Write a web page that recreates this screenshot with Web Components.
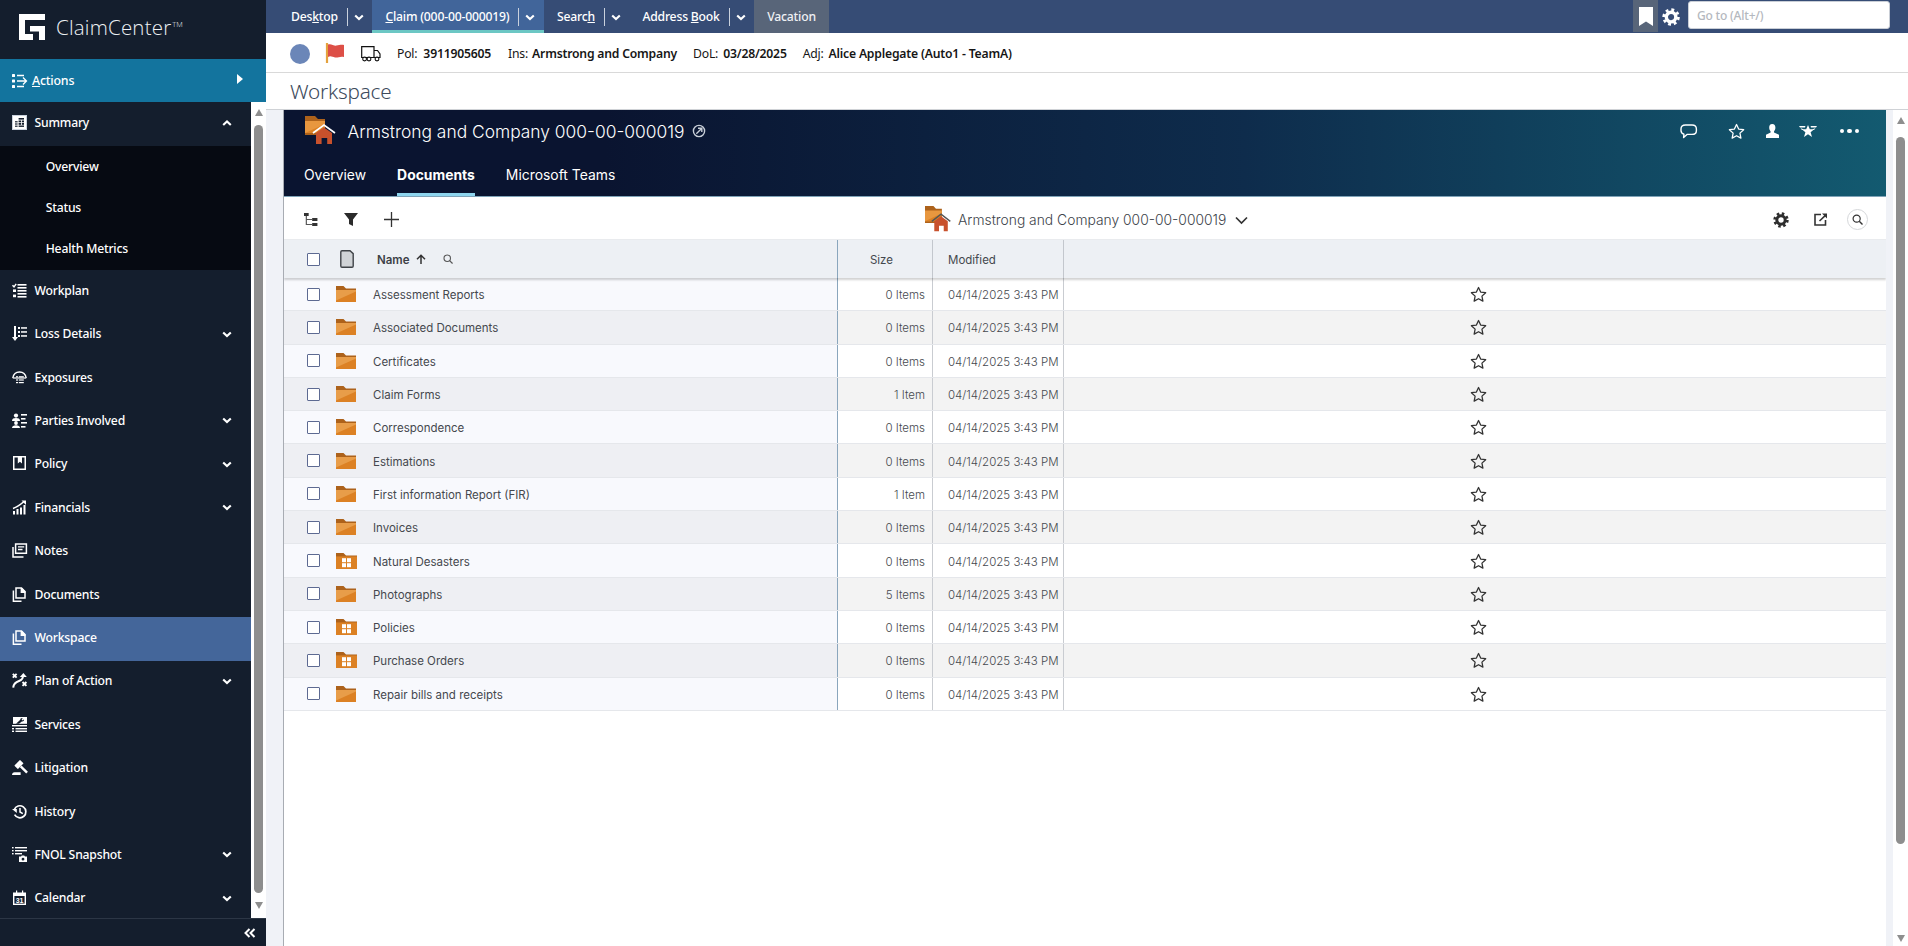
<!DOCTYPE html>
<html lang="en"><head><meta charset="utf-8"><title>ClaimCenter</title>
<style>
html,body{margin:0;padding:0;height:946px;overflow:hidden;background:#fff}
body{font-family:"Noto Sans",sans-serif}
cc-app{height:946px}
</style></head><body>
<cc-app>
  <cc-sidebar slot="side">
    <cc-nav-item icon="summary" chevron="up" style="--h:44px">Summary</cc-nav-item>
    <cc-sub-item>Overview</cc-sub-item>
    <cc-sub-item>Status</cc-sub-item>
    <cc-sub-item>Health Metrics</cc-sub-item>
    <cc-nav-item icon="workplan">Workplan</cc-nav-item>
    <cc-nav-item icon="loss" chevron="down">Loss Details</cc-nav-item>
    <cc-nav-item icon="exposures">Exposures</cc-nav-item>
    <cc-nav-item icon="parties" chevron="down">Parties Involved</cc-nav-item>
    <cc-nav-item icon="policy" chevron="down">Policy</cc-nav-item>
    <cc-nav-item icon="financials" chevron="down">Financials</cc-nav-item>
    <cc-nav-item icon="notes">Notes</cc-nav-item>
    <cc-nav-item icon="documents">Documents</cc-nav-item>
    <cc-nav-item icon="documents" selected>Workspace</cc-nav-item>
    <cc-nav-item icon="plan" chevron="down">Plan of Action</cc-nav-item>
    <cc-nav-item icon="services">Services</cc-nav-item>
    <cc-nav-item icon="litigation">Litigation</cc-nav-item>
    <cc-nav-item icon="history">History</cc-nav-item>
    <cc-nav-item icon="fnol" chevron="down">FNOL Snapshot</cc-nav-item>
    <cc-nav-item icon="calendar" chevron="down">Calendar</cc-nav-item>
  </cc-sidebar>
  <cc-topbar slot="top">
    <cc-nav-tab menu><span>Des<u>k</u>top</span></cc-nav-tab>
    <cc-nav-tab menu active><span><u>C</u>laim (000-00-000019)</span></cc-nav-tab>
    <cc-nav-tab menu><span>Searc<u>h</u></span></cc-nav-tab>
    <cc-nav-tab menu><span>Address <u>B</u>ook</span></cc-nav-tab>
    <cc-nav-tab muted><span>Vacation</span></cc-nav-tab>
  </cc-topbar>
  <cc-infobar slot="info"></cc-infobar>
  <cc-pagetitle slot="title">Workspace</cc-pagetitle>
  <cc-workspace slot="work">
    <cc-doc-row name="Assessment Reports" size="0 Items"></cc-doc-row>
    <cc-doc-row name="Associated Documents" size="0 Items"></cc-doc-row>
    <cc-doc-row name="Certificates" size="0 Items"></cc-doc-row>
    <cc-doc-row name="Claim Forms" size="1 Item"></cc-doc-row>
    <cc-doc-row name="Correspondence" size="0 Items"></cc-doc-row>
    <cc-doc-row name="Estimations" size="0 Items"></cc-doc-row>
    <cc-doc-row name="First information Report (FIR)" size="1 Item"></cc-doc-row>
    <cc-doc-row name="Invoices" size="0 Items"></cc-doc-row>
    <cc-doc-row name="Natural Desasters" size="0 Items" kind="grid"></cc-doc-row>
    <cc-doc-row name="Photographs" size="5 Items"></cc-doc-row>
    <cc-doc-row name="Policies" size="0 Items" kind="grid"></cc-doc-row>
    <cc-doc-row name="Purchase Orders" size="0 Items" kind="grid"></cc-doc-row>
    <cc-doc-row name="Repair bills and receipts" size="0 Items"></cc-doc-row>
  </cc-workspace>
</cc-app>
<script>
const ICONS={
 logo:'<path fill="#fff" d="M0 0H26V6H6V20H14V26H0Z"/><path fill="#fff" d="M11 12H26V26H20V17.5H11Z"/>',
 actions:'<g fill="#fff"><rect x="0" y="1" width="3" height="3" rx=".6"/><rect x="0" y="6.5" width="3" height="3" rx=".6"/><rect x="0" y="12" width="3" height="3" rx=".6"/></g><path d="M5 2.5H12M5 8H14M5 13.5H12M11 4.5L14.5 8L11 11.5" stroke="#fff" stroke-width="1.3" fill="none"/>',
 summary:'<rect x=".5" y=".5" width="14" height="14" fill="#fff" stroke="#c9d2de"/><g fill="#141e2d"><rect x="3" y="6.2" width="2.6" height="1.2"/><rect x="3" y="8.4" width="2.6" height="1.2"/><rect x="3" y="10.6" width="2.6" height="1.2"/><rect x="6.6" y="3" width="5.4" height="1.6"/><rect x="6.6" y="5.5" width="2.4" height="1.8"/><rect x="9.8" y="5.5" width="2.2" height="1.8"/><rect x="6.6" y="8" width="2.4" height="1.8"/><rect x="9.8" y="8" width="2.2" height="1.8"/><rect x="6.6" y="10.5" width="5.4" height="1.4"/></g>',
 workplan:'<path d="M.5 2.2L2 3.8 4.2.8" stroke="#fff" stroke-width="1.4" fill="none"/><g fill="#fff"><rect x="1" y="6.4" width="3" height="2.6"/><rect x="1" y="11.6" width="3" height="2.6"/><rect x="5.5" y="1" width="9" height="1.6"/><rect x="5.5" y="4" width="9" height="1.6"/><rect x="5.5" y="7" width="9" height="1.6"/><rect x="5.5" y="10" width="9" height="1.6"/><rect x="5.5" y="13" width="9" height="1.6"/></g>',
 loss:'<path fill="#fff" d="M2 0H4V11H6L3 15 0 11H2Z"/><g fill="#fff"><rect x="6" y="1" width="2" height="2"/><rect x="6" y="5" width="2" height="2"/><rect x="6" y="9" width="2" height="2"/><rect x="9" y="1.2" width="6" height="1.5"/><rect x="9" y="5.2" width="6" height="1.5"/><rect x="9" y="9.2" width="6" height="1.5"/></g>',
 exposures:'<path d="M.8 8C1.5 4 4 2 7.5 2S13.5 4 14.2 8" stroke="#fff" stroke-width="1.4" fill="none"/><path d="M.8 8H14.2" stroke="#fff" stroke-width="1.2"/><g fill="#fff"><rect x="4" y="6.2" width="2" height="1.2"/><rect x="6.8" y="6.2" width="5" height="1.2"/><rect x="4" y="9.4" width="2" height="1.2"/><rect x="6.8" y="9.4" width="5" height="1.2"/><rect x="4" y="12" width="2" height="1.2"/><rect x="6.8" y="12" width="5" height="1.2"/></g>',
 parties:'<g fill="#fff"><circle cx="4" cy="2.6" r="2.1"/><path d="M0 8C0 5.6 1.6 5 4 5S8 5.6 8 8Z"/><circle cx="4" cy="10" r="1.9"/><path d="M0 15C0 13 1.6 12.2 4 12.2S8 13 8 15Z"/><rect x="9" y="1" width="6" height="1.6"/><rect x="9" y="5" width="4.5" height="1.6"/><rect x="9" y="9" width="6" height="1.6"/><rect x="9" y="13" width="4.5" height="1.6"/></g>',
 policy:'<path fill="#fff" fill-rule="evenodd" d="M1 0H14V14H1ZM2.5 1.4V12.6H12.5V1.4H10V7.4L7.9 5.8 5.8 7.4V1.4Z"/>',
 financials:'<g fill="#fff"><rect x="1" y="11" width="2" height="3.5"/><rect x="4.5" y="9" width="2" height="5.5"/><rect x="8" y="7.5" width="2" height="7"/><rect x="11.5" y="5" width="2" height="9.5"/></g><path d="M1 8.5C4 7.5 8 5 12 1.5" stroke="#fff" stroke-width="1.5" fill="none"/><path fill="#fff" d="M9.5 .6H14V5Z"/>',
 notes:'<path d="M3.6 1H14.4V10.2H3.6Z" stroke="#fff" stroke-width="1.5" fill="none"/><path d="M1 4V14H11.5" stroke="#fff" stroke-width="1.5" fill="none"/><path d="M6 3.8H12.2M6 6.5H10.5" stroke="#fff" stroke-width="1.3"/>',
 documents:'<path d="M4 1H9.5L13 4.5V11H4Z" stroke="#fff" stroke-width="1.5" fill="none"/><path fill="#fff" d="M8.6 1H10L13.4 4.4V6H8.6Z"/><path d="M1.4 3.5V14.3H9.5" stroke="#fff" stroke-width="1.5" fill="none"/>',
 plan:'<path d="M.8.8L4.6 4.6M4.6 .8L.8 4.6M10.5 9L14.4 12.9M14.4 9L10.5 12.9" stroke="#fff" stroke-width="1.9"/><path d="M1.2 14.6C1.6 10.6 4 9 7 8S11 5.4 11 2.8" stroke="#fff" stroke-width="2" fill="none"/><path fill="#fff" d="M7.8 4L11.4 0 14.8 4Z"/>',
 services:'<path fill="#fff" d="M1 0H15V6.8H1Z"/><path fill="#141e2d" d="M4 6.8L8.3 2.8C8 1.7 9.3.6 10.8 1L9.6 2.4 10.8 3.4 12 2.2C12.3 3.8 11 4.8 9.8 4.4L7 6.8Z"/><g fill="#fff"><rect x="0" y="8" width="15" height="1.4"/><rect x="0" y="11" width="2" height="1.4"/><rect x="3.5" y="11" width="11.5" height="1.4"/><rect x="0" y="13.6" width="2" height="1.4"/><rect x="3.5" y="13.6" width="11.5" height="1.4"/></g>',
 litigation:'<g fill="#fff"><g transform="rotate(-45 7 4.6)"><rect x="3" y="2" width="8" height="5" rx=".5"/><rect x="5.8" y="7" width="2.4" height="9"/></g><path d="M0 15C0 13.4 1 12.2 2.6 12.2H8.6V15Z"/></g>',
 history:'<path d="M2.3 5.5A6 6 0 1 1 2.6 10.7" stroke="#fff" stroke-width="1.7" fill="none"/><path fill="#fff" d="M0 5H4.8V9Z"/><path d="M8 4V8L10.8 9.6" stroke="#fff" stroke-width="1.5" fill="none"/>',
 fnol:'<g fill="#fff"><rect x="0" y="0" width="1.6" height="1.4"/><rect x="0" y="3" width="1.6" height="1.4"/><rect x="0" y="6" width="1.6" height="1.4"/><rect x="3" y="0" width="12" height="1.4"/><rect x="3" y="3" width="12" height="1.4"/><rect x="3" y="6" width="7" height="1.4"/><path fill-rule="evenodd" d="M7 9.5H9L9.8 8.4H12.2L13 9.5H15V15H7ZM11 10.8A1.4 1.4 0 1 0 11 13.6 1.4 1.4 0 1 0 11 10.8Z"/></g>',
 calendar:'<path fill="#fff" d="M1 2.5H4V.5H5.2V2.5H10V.5H11.2V2.5H14V15H1Z"/><rect x="2.4" y="6" width="10.2" height="7.6" fill="#141e2d"/><text x="7.5" y="12.6" text-anchor="middle" font-family="Liberation Sans" font-weight="700" font-size="7" fill="#fff">31</text>',
 flag:'<path d="M1 0V20" stroke="#e4a23e" stroke-width="2.2"/><path fill="#dd4f47" d="M2 1.5C5 .2 7.5 3 10.5 2.6 12.8 2.3 15 1.5 18 2V14C14 13 12 15 9 14.5 6.5 14 4.5 12.5 2 14Z"/>',
 truck:'<path d="M.7.7H13V11.5H.7Z" fill="none" stroke="#111" stroke-width="1.2"/><path d="M13 4.5H16.5L19 8V11.5H13" fill="none" stroke="#111" stroke-width="1.2"/><g fill="#fff" stroke="#111" stroke-width="1.1"><circle cx="3.6" cy="13" r="1.9"/><circle cx="8" cy="13" r="1.9"/><circle cx="16" cy="13" r="1.9"/></g>',
 gear:'<circle cx="8" cy="8" r="4.2" fill="none" stroke="currentColor" stroke-width="3"/><circle cx="8" cy="8" r="6.4" fill="none" stroke="currentColor" stroke-width="2.6" stroke-dasharray="2.5 2.53"/>',
 bookmark:'<path fill="#fff" d="M0 0H14V19L7 14.5 0 19Z"/>',
 chat:'<path d="M5.5 1H12C15 1 16.4 2.6 16.4 5V6.4C16.4 8.8 15 10.4 12 10.4H7L3.6 13.6 3.9 10.2C2 9.6 1 8.4 1 6.4V5C1 2.6 2.6 1 5.5 1Z" fill="none" stroke="#fff" stroke-width="1.4" stroke-linejoin="round"/>',
 star:'<path d="M8 1.4L10 5.7 14.7 6.3 11.2 9.5 12.1 14.2 8 11.9 3.9 14.2 4.8 9.5 1.3 6.3 6 5.7Z" fill="none" stroke="currentColor" stroke-width="1.2" stroke-linejoin="round"/>',
 person:'<path fill="#fff" d="M6.2 0C8.5 0 9.4 1.6 9.4 3.6 9.4 5.4 8.8 6.6 8 7.4V8.6L13 10.8V14H0V10.8L4.6 8.6V7.4C3.8 6.6 3.2 5.4 3.2 3.6 3.2 1.6 4 0 6.2 0Z"/>',
 wings:'<path fill="#fff" d="M9 0L10.8 4.2H15.2L11.6 7.2 13 12 9 9.3 5 12 6.4 7.2 2.8 4.2H7.2Z"/><path fill="#fff" d="M0 1H6.4L6 2.6H1ZM1.6 3.4H3L4.6 5H3ZM18 1H11.6L12 2.6H17ZM16.4 3.4H15L13.4 5H15Z"/>',
 tree:'<g fill="#333"><rect x="0" y="0" width="4" height="3"/><rect x="7" y="5" width="4.5" height="3"/><rect x="7" y="10" width="4.5" height="3"/></g><path d="M2 3V11.5H7M2 6.5H7" stroke="#555" fill="none"/>',
 funnel:'<path fill="#2b2b2b" d="M0 0H14L9 6.5V13L5 11V6.5Z"/>',
 plus:'<path d="M7.5 0V15M0 7.5H15" stroke="#333" stroke-width="1.3"/>',
 exportb:'<path d="M7 1.5H1V12H11.5V7" fill="none" stroke="#333" stroke-width="1.6"/><path d="M5.5 8L12 1.8" stroke="#333" stroke-width="1.6"/><path fill="#333" d="M8 .5H13V5.5Z"/>',
 search:'<circle cx="5.5" cy="5.5" r="4.2" fill="none" stroke="currentColor" stroke-width="1.4"/><path d="M8.6 8.6L12.4 12.4" stroke="currentColor" stroke-width="1.6"/>',
 arrowup:'<path d="M5 10V1.5M1 5.2L5 1.2 9 5.2" stroke="#333" stroke-width="1.5" fill="none"/>',
 doc:'<path d="M2 .8H10L13.2 3.6V16C13.2 16.7 12.7 17.2 12 17.2H2C1.3 17.2 .8 16.7.8 16V2C.8 1.3 1.3.8 2 .8Z" fill="#d0d3d6" stroke="#3f4347" stroke-width="1.4"/>',
 folder:'<path fill="#ad621b" d="M0 0H7.5L10 2.4H20V16H0Z"/><path fill="#dc8124" d="M0 4H20V16H0Z"/><path fill="#e89d49" d="M0 4H20V5.5L0 14.5Z"/>',
 foldergrid:'<path fill="#ad621b" d="M0 0H7.5L10 2.4H21V16H0Z"/><path fill="#dc8124" d="M0 3.4H21V16H0Z"/><g fill="#fff"><rect x="6" y="5.2" width="4" height="4"/><rect x="11" y="5.2" width="4" height="4"/><rect x="6" y="10.2" width="4" height="4"/><rect x="11" y="10.2" width="4" height="4"/></g>',
 homefolder:'<path fill="#ad621b" d="M0 0H10L13 3H20V19H0Z"/><path fill="#e8973f" d="M0 5H20V17H0Z"/><path fill="#dc8124" d="M0 17L20 8V17Z"/><path d="M8 17L19 9 30 17" fill="none" stroke="var(--roof,#fff)" stroke-width="1.7"/><path fill="#c8512c" d="M19 11.5L27 17V28H22.2V22H16.6V28H11V17Z"/>',
 chevdown:'<path d="M1.2 1.4L5 5 8.8 1.4" fill="none" stroke="#fff" stroke-width="2.1"/>',
 chevup:'<path d="M1.2 5L5 1.4 8.8 5" fill="none" stroke="#fff" stroke-width="2.1"/>',
 chevdark:'<path d="M1 1.5L6.5 7 12 1.5" fill="none" stroke="#333" stroke-width="1.7"/>',
 collapse:'<path d="M5.5 1L1.5 5 5.5 9M10.5 1L6.5 5 10.5 9" fill="none" stroke="#fff" stroke-width="2"/>',
 ext:'<circle cx="7" cy="7" r="5.6" fill="none" stroke="#c9cfd8" stroke-width="1.4"/><path d="M4.3 9.7L9.6 4.4M6 4.2H9.8V8" fill="none" stroke="#c9cfd8" stroke-width="1.4"/>'
};
const VB={logo:'0 0 26 26',flag:'0 0 19 21',truck:'0 0 20 16',bookmark:'0 0 14 19',chat:'0 0 18 15',person:'0 0 13 14',wings:'0 0 18 13',tree:'0 0 12 13',funnel:'0 0 14 13',plus:'0 0 15 15',exportb:'0 0 13 13',search:'0 0 13 13',arrowup:'0 0 10 11',doc:'0 0 14 18',folder:'0 0 20 16',foldergrid:'0 0 21 16',homefolder:'0 0 32 30',chevdown:'0 0 10 6',chevup:'0 0 10 6',chevdark:'0 0 13 8',collapse:'0 0 12 10',ext:'0 0 14 14'};
class Base extends HTMLElement{
  constructor(){super();this.attachShadow({mode:'open'});}
}
customElements.define('cc-icon',class extends Base{
  connectedCallback(){
    const n=this.getAttribute('name'),w=this.getAttribute('w')||15,h=this.getAttribute('h')||w,vb=VB[n]||'0 0 15 15';
    this.shadowRoot.innerHTML=`<style>:host{display:inline-flex;flex:none;width:${w}px;height:${h}px}svg{display:block;width:100%;height:100%;overflow:visible}</style><svg viewBox="${vb}" preserveAspectRatio="none" aria-hidden="true">${ICONS[n]||''}</svg>`;
  }
});
customElements.define('cc-scrollbar',class extends Base{
  constructor(){super();this.shadowRoot.innerHTML=`<style>
  :host{display:flex;flex-direction:column;align-items:center;width:15px;flex:none;background:#fff;box-sizing:border-box;padding:var(--pt,7px) 0 var(--pb,4px)}
  .a{width:0;height:0;border-left:4.5px solid transparent;border-right:4.5px solid transparent;flex:none}
  .u{border-bottom:7px solid #8e8e8e}.d{border-top:7px solid #8e8e8e}
  .track{flex:1;width:9px;min-height:0;padding:var(--tt,8px) 0 var(--tb,8px);display:flex}
  .thumb{flex:1;background:#8e8e8e;border-radius:5px}
  </style><div class="a u"></div><div class="track"><div class="thumb"></div></div><div class="a d"></div>`;}
});
customElements.define('cc-app',class extends Base{
  constructor(){super();this.shadowRoot.innerHTML=`<style>
  :host{display:grid;grid-template-columns:266px 1fr;height:946px;overflow:hidden}
  .main{display:flex;flex-direction:column;min-width:0;height:946px}
  </style><slot name="side"></slot><div class="main"><slot name="top"></slot><slot name="info"></slot><slot name="title"></slot><slot name="work"></slot></div>`;}
});
customElements.define('cc-sidebar',class extends Base{
  constructor(){super();this.shadowRoot.innerHTML=`<style>
  :host{display:flex;flex-direction:column;height:946px;background:#141e2d;color:#fff;font:500 12.2px "Noto Sans",sans-serif;letter-spacing:-.2px}
  .logo{height:59px;flex:none;display:flex;align-items:center;gap:11px;padding:0 0 5px 19px;box-sizing:border-box}
  .name{font:300 20.5px "Open Sans",sans-serif;letter-spacing:.2px;color:#eef1f4;line-height:1}
  sup{font-size:7.5px;vertical-align:8px;line-height:0;letter-spacing:0;margin-left:1px}
  .actions{height:43px;flex:none;background:#13749e;display:flex;align-items:center;padding-left:12px}
  .actions .lbl{margin-left:5px;flex:1;font-size:12.4px}
  .tri{width:0;height:0;border-top:5px solid transparent;border-bottom:5px solid transparent;border-left:6px solid #fff;margin-right:23px;margin-bottom:3px}
  .mid{flex:1;display:flex;min-height:0}
  .list{flex:1;min-width:0;overflow:hidden;display:flex;flex-direction:column}
  .foot{height:28px;flex:none;border-top:1px solid #2c3645;box-sizing:border-box;display:flex;align-items:center;justify-content:flex-end;padding-right:10px}
  cc-scrollbar{--pt:7px;--pb:9px;--tt:9px;--tb:9px}
  </style>
  <div class="logo"><cc-icon name="logo" w="26" h="26"></cc-icon><span class="name">ClaimCenter<sup>TM</sup></span></div>
  <div class="actions"><cc-icon name="actions" w="15" h="15"></cc-icon><span class="lbl"><u>A</u>ctions</span><span class="tri"></span></div>
  <div class="mid"><div class="list"><slot></slot></div><cc-scrollbar></cc-scrollbar></div>
  <div class="foot"><cc-icon name="collapse" w="12" h="10"></cc-icon></div>`;}
});
customElements.define('cc-nav-item',class extends Base{
  connectedCallback(){
    const c=this.getAttribute('chevron');
    this.shadowRoot.innerHTML=`<style>
    :host{display:flex;flex:none;align-items:center;height:var(--h,43.42px);padding:0 0 3px 12px;box-sizing:border-box;${this.hasAttribute('selected')?'background:#44669a;':''}}
    .l{flex:1;margin-left:7.5px;white-space:nowrap}
    cc-icon{margin-right:19px}
    </style><cc-icon name="${this.getAttribute('icon')}" w="15" h="15" style="margin:0"></cc-icon><span class="l"><slot></slot></span>${c?`<cc-icon name="chev${c}" w="10" h="6"></cc-icon>`:''}`;
  }
});
customElements.define('cc-sub-item',class extends Base{
  constructor(){super();this.shadowRoot.innerHTML=`<style>:host{display:flex;flex:none;align-items:center;height:41.33px;padding:0 0 1px 45.7px;box-sizing:border-box;background:#060a12}</style><slot></slot>`;}
});
customElements.define('cc-topbar',class extends Base{
  constructor(){super();this.shadowRoot.innerHTML=`<style>
  :host{display:flex;height:33px;flex:none;background:#364c75;color:#fff;font:500 12.2px "Noto Sans",sans-serif;letter-spacing:-.2px;padding-left:12px}
  .sp{flex:1}
  .bm{width:25px;height:32px;background:#586579;display:flex;align-items:center;justify-content:center}
  .g{width:30px;display:flex;align-items:center;justify-content:center;color:#fff;box-sizing:border-box;padding-right:6px}
  .go{width:202px;height:28px;margin:1px 18px 0 0;background:#fff;border:1px solid #c9ced6;border-radius:3px;box-sizing:border-box;color:#b4b8be;padding-left:8px;display:flex;align-items:center;font-size:12px;letter-spacing:-.2px}
  </style><slot></slot><div class="sp"></div><div class="bm"><cc-icon name="bookmark" w="14" h="19"></cc-icon></div><div class="g"><cc-icon name="gear" w="17" h="17"></cc-icon></div><div class="go">Go to (Alt+/)</div>`;}
});
customElements.define('cc-nav-tab',class extends Base{
  connectedCallback(){
    const m=this.hasAttribute('menu'),a=this.hasAttribute('active'),mu=this.hasAttribute('muted');
    this.shadowRoot.innerHTML=`<style>
    :host{display:flex;align-items:center;height:33px;box-sizing:border-box;padding:0 ${m?8.5:13}px 0 13px;white-space:nowrap;${a?'background:#41659a;box-shadow:inset 0 -3px 0 #6cc7c4;':''}${mu?'background:#586579;color:#eef0f3;':''}}
    .d{width:1px;height:18px;background:#c9d1dd;margin:0 6px 0 9px}
    </style><slot></slot>${m?'<span class="d"></span><cc-icon name="chevdown" w="10" h="6"></cc-icon>':''}`;
  }
});
customElements.define('cc-infobar',class extends Base{
  constructor(){super();this.shadowRoot.innerHTML=`<style>
  :host{display:flex;align-items:center;flex:none;height:40px;box-sizing:border-box;border-bottom:1px solid #d9d9d9;background:#fff;color:#161616;padding:2px 0 0 24px;font:12.2px "Noto Sans",sans-serif;letter-spacing:-.2px}
  .c{width:20px;height:20px;border-radius:50%;background:#6b86b8;margin-right:16px}
  b{font-weight:600;margin-left:5px}
  .i{white-space:nowrap;margin-right:16px}
  .p{margin-right:17px}.p b{margin-left:6px}
  .n b{margin-left:4px}
  </style><span class="c"></span><cc-icon name="flag" w="19" h="21" style="margin-right:16px"></cc-icon><cc-icon name="truck" w="20" h="16" style="margin-right:16px"></cc-icon>
  <span class="i p">Pol:<b>3911905605</b></span><span class="i n">Ins:<b>Armstrong and Company</b></span><span class="i">DoL:<b>03/28/2025</b></span><span class="i">Adj:<b>Alice Applegate (Auto1 - TeamA)</b></span>`;}
});
customElements.define('cc-pagetitle',class extends Base{
  constructor(){super();this.shadowRoot.innerHTML=`<style>
  :host{display:flex;align-items:center;flex:none;height:37px;box-sizing:border-box;padding:0 0 0 24px;border-bottom:1px solid #cfd2d6;background:#fff;color:#3d4b5c;font:300 20.7px "Noto Sans",sans-serif;letter-spacing:-.2px}
  </style><slot></slot>`;}
});
customElements.define('cc-workspace',class extends Base{
  constructor(){super();this.shadowRoot.innerHTML=`<style>
  :host{display:flex;flex:1;min-height:0;background:#f0f2f7}
  .panel{flex:1;margin-left:17px;margin-right:7px;background:#fff;border-left:1px solid #a8acb3;display:flex;flex-direction:column;min-width:0;overflow:hidden;--roof:#fff}
  .hero{height:87px;flex:none;background:linear-gradient(90deg,#0a1430 0%,#0a1430 20%,#0e2c4c 60%,#135a70 100%);border-bottom:1px solid #7fa3b8;box-sizing:border-box;color:#fff;display:flex;flex-direction:column;position:relative}
  .t1{height:42px;flex:none;display:flex;align-items:center;padding:0 27px 6px 21px}
  .t1 .tt{font:300 17.4px Inter,sans-serif;margin-left:10.5px;white-space:nowrap}
  .sp{flex:1}
  .t2{flex:1;display:flex;align-items:flex-end;gap:31px;padding-left:20px;font:13.9px Inter,sans-serif}
  .tab{height:34px;display:flex;align-items:center;box-sizing:border-box;padding-bottom:8px;white-space:nowrap}
  .tab.on{font-weight:700;border-bottom:3px solid #8ed5ee;padding-bottom:5px}
  .tools{height:43px;flex:none;display:flex;align-items:center;padding:2px 18px 0 20px;position:relative;border-bottom:1px solid #e9ebee;box-sizing:border-box;color:#333}
  .center{position:absolute;left:641px;top:9px;display:flex;align-items:center;font:300 13.85px Inter,sans-serif;color:#3d434a;white-space:nowrap}
  .round{width:21px;height:21px;border:1px solid #d5d7da;border-radius:50%;box-sizing:border-box;display:flex;align-items:center;justify-content:center}
  .head{height:38px;flex:none;display:grid;grid-template-columns:554px 95px 131px 1fr;background:#edf0f4;box-shadow:0 2px 2px rgba(0,0,0,.18);position:relative;z-index:1;font:11.5px Inter,sans-serif;color:#44484d}
  .h1{display:flex;align-items:center;border-right:1px solid #8aa6bd;padding-left:23px}
  .h2{display:flex;align-items:center;justify-content:flex-end;border-right:1px solid #c3c7cd;padding:1px 39px 0 0}
  .h3{display:flex;align-items:center;border-right:1px solid #c3c7cd;padding:1px 0 0 15px}
  .cb{width:13px;height:13px;border:1.3px solid #5d6a92;background:#fff;box-sizing:border-box;border-radius:1px;flex:none}
  .nm{font-weight:600;margin-left:1px;padding-top:1px;color:#3c4046}
  .rows{flex:none;display:block;position:relative;z-index:0}
  </style>
  <div class="panel">
    <div class="hero">
      <div class="t1"><cc-icon name="homefolder" w="32" h="30"></cc-icon><span class="tt">Armstrong and Company 000-00-000019</span><cc-icon name="ext" w="14" h="14" style="margin-left:7px"></cc-icon><span class="sp"></span>
        <cc-icon name="chat" w="18" h="15" style="margin-right:30px"></cc-icon>
        <span style="color:#fff;display:inline-flex;margin-right:22px"><cc-icon name="star" w="16" h="16"></cc-icon></span>
        <cc-icon name="person" w="13" h="14" style="margin-right:20px"></cc-icon>
        <cc-icon name="wings" w="18" h="13" style="margin-right:23px"></cc-icon>
        <span style="display:inline-flex;gap:3px"><i style="width:4.5px;height:4.5px;border-radius:50%;background:#fff"></i><i style="width:4.5px;height:4.5px;border-radius:50%;background:#fff"></i><i style="width:4.5px;height:4.5px;border-radius:50%;background:#fff"></i></span>
      </div>
      <div class="t2"><span class="tab">Overview</span><span class="tab on">Documents</span><span class="tab">Microsoft Teams</span></div>
    </div>
    <div class="tools">
      <cc-icon name="tree" w="14" h="13"></cc-icon><cc-icon name="funnel" w="14" h="13" style="margin-left:26px"></cc-icon><cc-icon name="plus" w="15" h="15" style="margin-left:26px"></cc-icon>
      <div class="center"><cc-icon name="homefolder" w="27" h="27" style="--roof:#555;margin-right:6px"></cc-icon><span>Armstrong and Company 000-00-000019</span><cc-icon name="chevdark" w="13" h="8" style="margin-left:8.5px"></cc-icon></div>
      <span class="sp"></span>
      <span style="color:#2d2d2d;display:inline-flex"><cc-icon name="gear" w="15" h="15"></cc-icon></span>
      <cc-icon name="exportb" w="13" h="13" style="margin:0 20px 0 26px"></cc-icon>
      <span class="round" style="color:#333"><cc-icon name="search" w="11" h="11"></cc-icon></span>
    </div>
    <div class="head">
      <div class="h1"><span class="cb"></span><cc-icon name="doc" w="14" h="18" style="margin:0 22px 0 20px"></cc-icon><span class="nm">Name</span><cc-icon name="arrowup" w="10" h="11" style="margin:0 17px 0 6px"></cc-icon><span style="color:#555;display:inline-flex"><cc-icon name="search" w="10" h="10"></cc-icon></span></div>
      <div class="h2">Size</div><div class="h3">Modified</div><div></div>
    </div>
    <div class="rows"><slot></slot></div>
  </div>
  <cc-scrollbar style="--pt:7px;--pb:4px;--tt:13px;--tb:91px"></cc-scrollbar>`;}
});
customElements.define('cc-doc-row',class extends Base{
  connectedCallback(){
    const g=this.getAttribute('kind')==='grid';
    this.shadowRoot.innerHTML=`<style>
    :host{display:grid;grid-template-columns:554px 95px 131px 1fr;height:33.3px;box-sizing:border-box;border-bottom:1px solid #e5e7eb;font:11.5px Inter,sans-serif;color:#45484e;font-weight:300;background:#fff}
    :host(:nth-child(odd)) .a{background:#f8f9fd}
    :host(:nth-child(even)) .a{background:#eeeff3}
    :host(:nth-child(even)){background:#f3f3f3}
    .a{display:flex;align-items:center;padding-left:23px;border-right:1px solid #8aa6bd;white-space:nowrap;font-weight:400}
    .a span.t{padding-top:2px}
    .b{display:flex;align-items:center;justify-content:flex-end;padding-right:7px;padding-top:2px;border-right:1px solid #c9ccd1}
    .c{display:flex;align-items:center;padding-left:15px;padding-top:2px;border-right:1px solid #c9ccd1;white-space:nowrap}
    .d{display:flex;align-items:center;justify-content:center;padding-left:6px;color:#333}
    .cb{width:13px;height:13px;border:1.3px solid #5d6a92;background:#fff;box-sizing:border-box;border-radius:1px;flex:none}
    </style><div class="a"><span class="cb"></span><cc-icon name="${g?'foldergrid':'folder'}" w="${g?21:20}" h="16" style="margin:0 ${g?16:17}px 0 16px"></cc-icon><span class="t">${this.getAttribute('name')}</span></div><div class="b">${this.getAttribute('size')}</div><div class="c">04/14/2025 3:43 PM</div><div class="d"><cc-icon name="star" w="16" h="16"></cc-icon></div>`;
  }
});
</script>
</body></html>
